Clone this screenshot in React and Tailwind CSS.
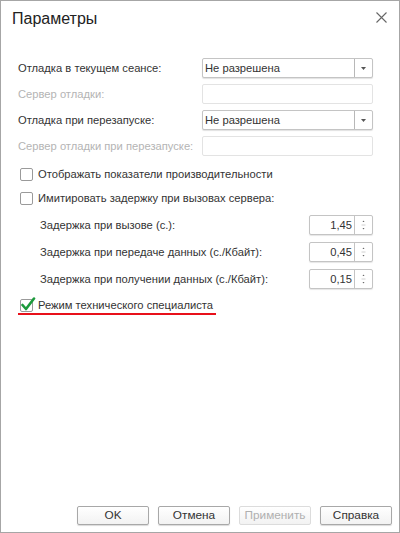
import React from 'react';

const font = { fontFamily: '"Liberation Sans", Arial, sans-serif' };

function Select({ value }) {
  return (
    <div className="flex h-[20px] w-[171px] rounded-[2px] border border-[#c4c4c4] bg-white shadow-[0_1px_1px_rgba(0,0,0,0.12)]">
      <div className="flex-1 pl-[2px] leading-[18px] text-[#333]">{value}</div>
      <div className="flex w-[18px] items-center justify-center border-l border-[#b8b8b8]">
        <svg width="5" height="3" viewBox="0 0 5 3"><path d="M0 0h5L2.5 3z" fill="#555" /></svg>
      </div>
    </div>
  );
}

function Input() {
  return <div className="h-[20px] w-[171px] rounded-[2px] border border-[#e3e3e3] bg-white" />;
}

function Spin({ value }) {
  return (
    <div className="flex h-[20px] w-[64px] rounded-[2px] border border-[#c4c4c4] bg-white shadow-[0_1px_1px_rgba(0,0,0,0.1)]">
      <div className="flex-1 pr-[2px] text-right leading-[18px] text-[#333]">{value}</div>
      <div className="flex w-[18px] flex-col items-center justify-center border-l border-[#c4c4c4]">
        <svg width="5" height="16" viewBox="0 0 5 16">
          <path d="M1.5 5h2L2.5 3.5z" fill="#666" />
          <path d="M0.5 8h4" stroke="#d0d0d0" strokeWidth="1" />
          <path d="M1.5 11h2L2.5 12.5z" fill="#666" />
        </svg>
      </div>
    </div>
  );
}

function Checkbox({ checked }) {
  return (
    <div className="relative h-[13px] w-[13px] shrink-0 rounded-[2px] border border-[#9a9a9a] bg-white">
      {checked && (
        <svg className="absolute -left-[1px] -top-[3px]" width="16" height="15" viewBox="0 0 16 15">
          <path d="M2.5 8 L6 12 L14 1.5" stroke="#1c9a3c" strokeWidth="2.6" fill="none" strokeLinecap="round" strokeLinejoin="round" />
        </svg>
      )}
    </div>
  );
}

function Button({ children, disabled }) {
  return (
    <div
      className={
        'flex h-[19px] w-[72px] items-center justify-center rounded-[2px] border bg-gradient-to-b from-white to-[#f2f2f2] text-[11.8px] ' +
        (disabled ? 'border-[#dcdcdc] text-[#b0b0b0]' : 'border-[#a8a8a8] text-[#333] shadow-[0_1px_1px_rgba(0,0,0,0.15)]')
      }
    >
      {children}
    </div>
  );
}

export default function App() {
  const delays = [
    ['Задержка при вызове (с.):', '1,45'],
    ['Задержка при передаче данных (с./Кбайт):', '0,45'],
    ['Задержка при получении данных (с./Кбайт):', '0,15'],
  ];

  return (
    <div style={font} className="flex h-[533px] w-[400px] flex-col border border-[#a6a6a6] bg-white text-[11.2px] text-[#333]">
      <div className="flex h-[57px] items-start justify-between pl-[11px] pr-[12px] pt-[8px]">
        <div className="text-[16px] leading-[20px] text-[#222]">Параметры</div>
        <svg className="mt-[3px]" width="11" height="11" viewBox="0 0 11 11">
          <path d="M0.5 0.5L10.5 10.5M10.5 0.5L0.5 10.5" stroke="#666" strokeWidth="1.1" />
        </svg>
      </div>

      <div className="flex flex-col gap-[6px] pl-[17px]">
        <div className="flex h-[20px] items-center">
          <div className="w-[184px]">Отладка в текущем сеансе:</div>
          <Select value="Не разрешена" />
        </div>
        <div className="flex h-[20px] items-center">
          <div className="w-[184px] text-[#b4b4b4]">Сервер отладки:</div>
          <Input />
        </div>
        <div className="flex h-[20px] items-center">
          <div className="w-[184px]">Отладка при перезапуске:</div>
          <Select value="Не разрешена" />
        </div>
        <div className="flex h-[20px] items-center">
          <div className="w-[184px] text-[#b4b4b4]">Сервер отладки при перезапуске:</div>
          <Input />
        </div>
      </div>

      <div className="mt-[8px] flex flex-col gap-[4px] pl-[19px]">
        <div className="flex h-[20px] items-center gap-[5px]">
          <Checkbox />
          <span>Отображать показатели производительности</span>
        </div>
        <div className="flex h-[20px] items-center gap-[5px]">
          <Checkbox />
          <span>Имитировать задержку при вызовах сервера:</span>
        </div>
      </div>

      <div className="mt-[7px] flex flex-col gap-[7px] pl-[39px] pr-[26px]">
        {delays.map(([label, value]) => (
          <div key={label} className="flex h-[20px] items-center justify-between">
            <span>{label}</span>
            <Spin value={value} />
          </div>
        ))}
      </div>

      <div className="mt-[6px] flex flex-col items-start pl-[17px]">
        <div className="flex h-[20px] items-center gap-[5px] pl-[2px]">
          <Checkbox checked />
          <span>Режим технического специалиста</span>
        </div>
        <div className="mt-[-2px] h-[2px] w-[198px] bg-[#e8101a]" />
      </div>

      <div className="mt-auto flex justify-end gap-[9px] pb-[7px] pr-[7px]">
        <Button>OK</Button>
        <Button>Отмена</Button>
        <Button disabled>Применить</Button>
        <Button>Справка</Button>
      </div>
    </div>
  );
}
